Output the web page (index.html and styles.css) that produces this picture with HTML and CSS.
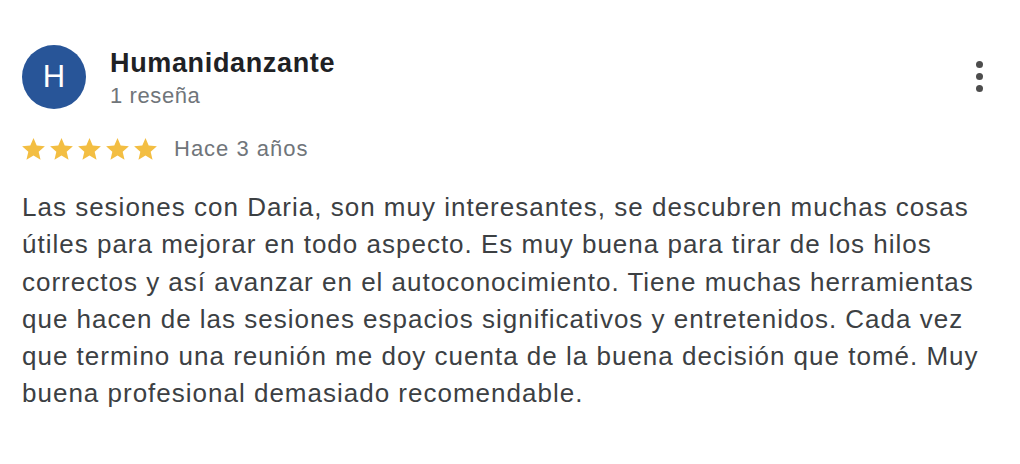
FILE: index.html
```html
<!DOCTYPE html>
<html lang="es">
<head>
<meta charset="utf-8">
<title>Reseña</title>
<link rel="stylesheet" href="styles.css">
</head>
<body>
<article class="review">
  <header class="review-head">
    <div class="avatar">H</div>
    <div class="author">
      <div class="author-name">Humanidanzante</div>
      <div class="author-meta">1 reseña</div>
    </div>
    <button class="menu" aria-label="Más opciones">
      <span class="dot"></span><span class="dot"></span><span class="dot"></span>
    </button>
  </header>
  <div class="rating">
    <div class="stars">
      <svg class="star" viewBox="2 2 20 19.3"><path d="M12 17.27L18.18 21l-1.64-7.03L22 9.24l-7.19-.61L12 2 9.19 8.63 2 9.24l5.46 4.73L5.82 21z"/></svg>
      <svg class="star" viewBox="2 2 20 19.3"><path d="M12 17.27L18.18 21l-1.64-7.03L22 9.24l-7.19-.61L12 2 9.19 8.63 2 9.24l5.46 4.73L5.82 21z"/></svg>
      <svg class="star" viewBox="2 2 20 19.3"><path d="M12 17.27L18.18 21l-1.64-7.03L22 9.24l-7.19-.61L12 2 9.19 8.63 2 9.24l5.46 4.73L5.82 21z"/></svg>
      <svg class="star" viewBox="2 2 20 19.3"><path d="M12 17.27L18.18 21l-1.64-7.03L22 9.24l-7.19-.61L12 2 9.19 8.63 2 9.24l5.46 4.73L5.82 21z"/></svg>
      <svg class="star" viewBox="2 2 20 19.3"><path d="M12 17.27L18.18 21l-1.64-7.03L22 9.24l-7.19-.61L12 2 9.19 8.63 2 9.24l5.46 4.73L5.82 21z"/></svg>
    </div>
    <span class="date">Hace 3 años</span>
  </div>
  <p class="review-text">Las sesiones con Daria, son muy interesantes, se descubren muchas cosas útiles para mejorar en todo aspecto. Es muy buena para tirar de los hilos correctos y así avanzar en el autoconocimiento. Tiene muchas herramientas que hacen de las sesiones espacios significativos y entretenidos. Cada vez que termino una reunión me doy cuenta de la buena decisión que tomé. Muy buena profesional demasiado recomendable.</p>
</article>
</body>
</html>
```
FILE: styles.css
```css
html, body {
  margin: 0;
  padding: 0;
  background: #ffffff;
}

body {
  font-family: "Liberation Sans", Arial, Helvetica, sans-serif;
  color: #3c4043;
}

.review {
  padding: 45px 22px 0 22px;
}

.review-head {
  display: flex;
  align-items: flex-start;
}

.avatar {
  width: 64px;
  height: 64px;
  border-radius: 50%;
  background: #285598;
  color: #ffffff;
  font-size: 31px;
  line-height: 64px;
  text-align: center;
  flex: none;
}

.author {
  margin-left: 24px;
  margin-top: 3px;
  flex: 1;
}

.author-name {
  font-size: 27px;
  font-weight: 700;
  line-height: 30px;
  letter-spacing: 0.65px;
  color: #202124;
}

.author-meta {
  margin-top: 3px;
  font-size: 22px;
  line-height: 30px;
  letter-spacing: 0.6px;
  color: #70757a;
}

.menu {
  flex: none;
  display: flex;
  flex-direction: column;
  align-items: center;
  gap: 5px;
  margin: 16px 11px 0 0;
  padding: 0;
  border: 0;
  background: none;
  width: 16px;
}

.dot {
  width: 7px;
  height: 7px;
  border-radius: 50%;
  background: #4d4d4d;
}

.rating {
  display: flex;
  align-items: center;
  margin-top: 23px;
  height: 30px;
}

.stars {
  display: flex;
  gap: 5px;
}

.star {
  width: 23px;
  height: 22px;
  fill: #f3be42;
}

.date {
  margin-left: 17px;
  font-size: 22px;
  letter-spacing: 1px;
  color: #70757a;
}

.review-text {
  margin: 25px 0 0 0;
  max-width: 962px;
  font-size: 26px;
  line-height: 37.3px;
  letter-spacing: 1px;
  color: #3c4043;
}
```
